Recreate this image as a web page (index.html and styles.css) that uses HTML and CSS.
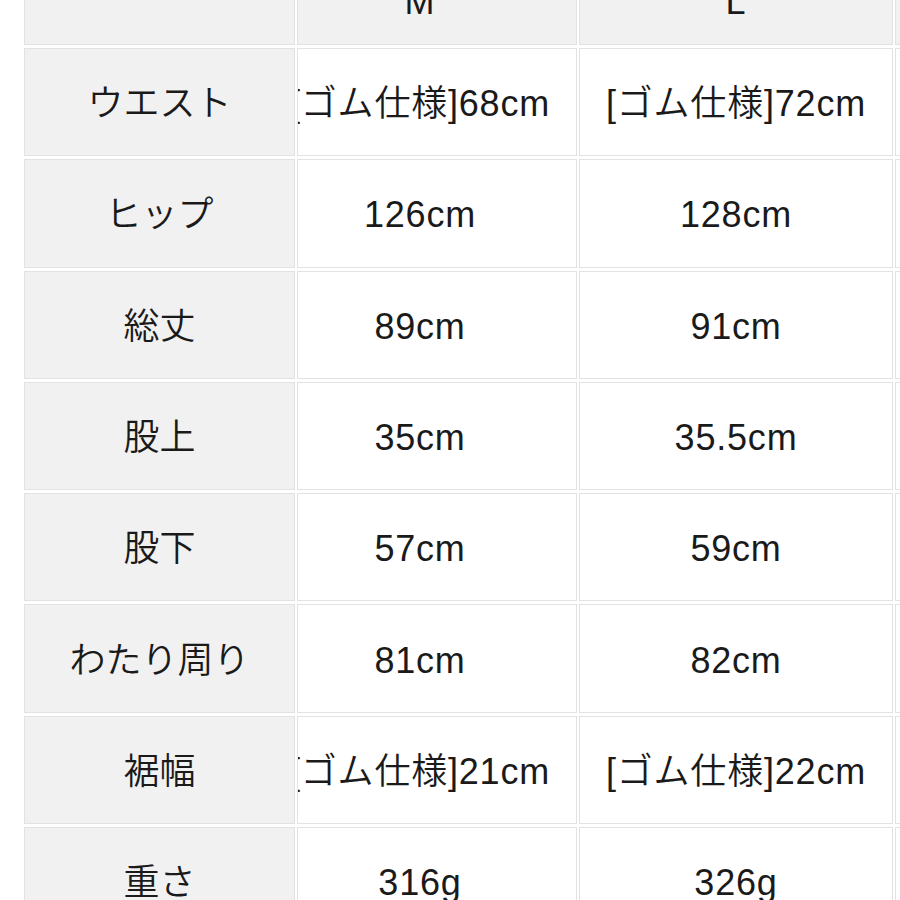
FILE: index.html
```html
<!DOCTYPE html>
<html lang="ja">
<head>
<meta charset="utf-8">
<link rel="stylesheet" href="styles.css">
</head>
<body>
<div class="sheet">
  <div class="cell head label"></div>
  <div class="cell head mid"><span>M</span></div>
  <div class="cell head"><span>L</span></div>
  <div class="cell edge head"></div>

  <div class="cell label">ウエスト</div>
  <div class="cell mid">[ゴム仕様]68cm</div>
  <div class="cell">[ゴム仕様]72cm</div>
  <div class="cell edge"></div>

  <div class="cell label">ヒップ</div>
  <div class="cell mid">126cm</div>
  <div class="cell">128cm</div>
  <div class="cell edge"></div>

  <div class="cell label">総丈</div>
  <div class="cell mid">89cm</div>
  <div class="cell">91cm</div>
  <div class="cell edge"></div>

  <div class="cell label">股上</div>
  <div class="cell mid">35cm</div>
  <div class="cell">35.5cm</div>
  <div class="cell edge"></div>

  <div class="cell label">股下</div>
  <div class="cell mid">57cm</div>
  <div class="cell">59cm</div>
  <div class="cell edge"></div>

  <div class="cell label">わたり周り</div>
  <div class="cell mid">81cm</div>
  <div class="cell">82cm</div>
  <div class="cell edge"></div>

  <div class="cell label">裾幅</div>
  <div class="cell mid">[ゴム仕様]21cm</div>
  <div class="cell">[ゴム仕様]22cm</div>
  <div class="cell edge"></div>

  <div class="cell label">重さ</div>
  <div class="cell mid">316g</div>
  <div class="cell">326g</div>
  <div class="cell edge"></div>
</div>
</body>
</html>
```

FILE: styles.css
```css
html, body {
  margin: 0;
  padding: 0;
  background: #ffffff;
  overflow: hidden;
  width: 900px;
  height: 900px;
}

.sheet {
  display: grid;
  grid-template-columns: 271px 280px 314px 40px;
  grid-template-rows: 86px repeat(8, 108.3px);
  column-gap: 2px;
  row-gap: 3px;
  margin-top: -41px;
  margin-left: 24px;
  font-family: "Liberation Sans", "Noto Sans CJK JP", sans-serif;
  font-weight: 350;
  font-size: 36px;
  color: #1a1a1a;
}

.cell {
  box-sizing: border-box;
  border: 1.5px solid #e2e2e2;
  background: #ffffff;
  display: flex;
  align-items: center;
  justify-content: center;
  white-space: nowrap;
  overflow: hidden;
  line-height: 1;
  padding-top: 4px;
  letter-spacing: 0.8px;
}

.mid {
  padding-right: 34px;
}

.label {
  background: #f1f1f1;
  letter-spacing: 0;
}

.head {
  background: #f1f1f1;
  padding-top: 0;
}

.edge {
  border-right: none;
}
```
